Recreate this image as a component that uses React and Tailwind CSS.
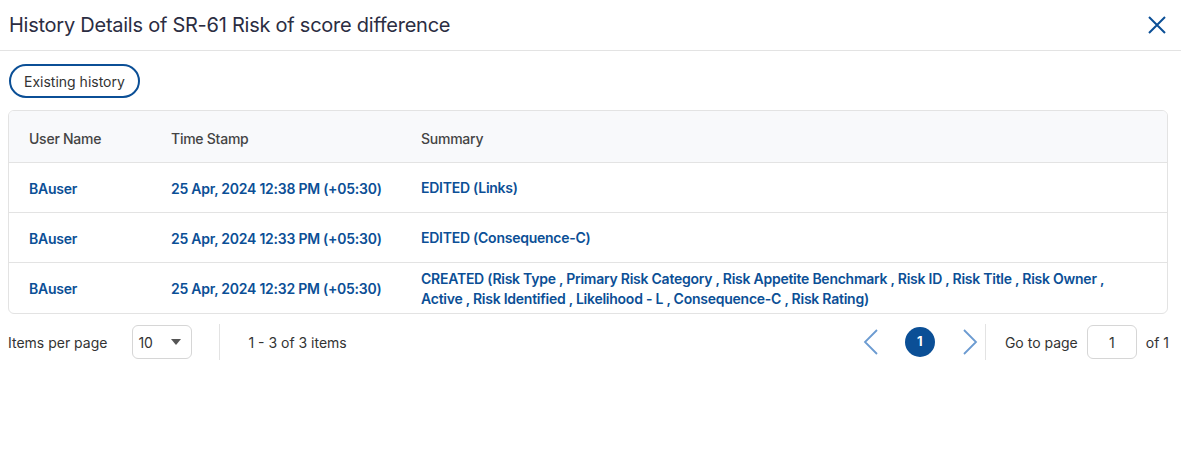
import React from "react";

const rows = [
  { user: "BAuser", time: "25 Apr, 2024 12:38 PM (+05:30)", summary: "EDITED (Links)" },
  { user: "BAuser", time: "25 Apr, 2024 12:33 PM (+05:30)", summary: "EDITED (Consequence-C)" },
  {
    user: "BAuser",
    time: "25 Apr, 2024 12:32 PM (+05:30)",
    summary:
      "CREATED (Risk Type , Primary Risk Category , Risk Appetite Benchmark , Risk ID , Risk Title , Risk Owner , Active , Risk Identified , Likelihood - L , Consequence-C , Risk Rating)",
  },
];

export default function App() {
  return (
    <div className="w-[1181px] h-[461px] bg-white text-[#333] font-['Inter',sans-serif] tracking-[-0.25px]">
      <div className="flex items-center justify-between h-[51px] pl-[9px] pr-[14px] border-b border-[#e3e3e3]">
        <h1 className="text-[20px] text-[#2b2d42]">History Details of SR-61 Risk of score difference</h1>
        <svg width="20" height="20" viewBox="0 0 20 20" className="text-[#0b4f96]">
          <path d="M2 2 L18 18 M18 2 L2 18" stroke="currentColor" strokeWidth="2" />
        </svg>
      </div>
      <div className="px-[8px] pt-[13px]">
        <button className="ml-[1px] h-[34px] px-[13px] rounded-full border-2 border-[#0b4f96] text-[14px] text-[#333] tracking-normal">
          Existing history
        </button>
        <div className="mt-[12px] w-[1160px] border border-[#e3e3e3] rounded-[6px] overflow-hidden">
          <div className="flex items-center h-[52px] pt-[3px] bg-[#f8f9fb] border-b border-[#e3e3e3] text-[14px] text-[#444] font-medium">
            <div className="w-[142px] pl-[20px]">User Name</div>
            <div className="w-[250px] pl-[20px]">Time Stamp</div>
            <div className="flex-1 pl-[20px]">Summary</div>
          </div>
          {rows.map((r, i) => (
            <div
              key={i}
              className={`flex items-center h-[50px] pt-[1px] text-[14px] font-semibold text-[#0b4f96] ${i < rows.length - 1 ? "border-b border-[#e3e3e3]" : ""}`}
            >
              <div className="w-[142px] pl-[20px]">{r.user}</div>
              <div className="w-[250px] pl-[20px]">{r.time}</div>
              <div className="flex-1 pl-[20px] pr-[40px] leading-[20px]">{r.summary}</div>
            </div>
          ))}
        </div>
        <div className="flex items-center h-[56px] text-[14px] text-[#333] tracking-normal">
          <span>Items per page</span>
          <div className="ml-[25px] w-[60px] h-[34px] border border-[#d6d6d6] rounded-[6px] flex items-center justify-between pl-[5px] pr-[10px]">
            <span>10</span>
            <svg width="10" height="6" viewBox="0 0 10 6"><path d="M0 0 L10 0 L5 6 Z" fill="#555" /></svg>
          </div>
          <div className="ml-[27px] w-px h-[36px] bg-[#e3e3e3]" />
          <span className="ml-[28px]">1 - 3 of 3 items</span>
          <div className="flex-1" />
          <svg width="16" height="28" viewBox="0 0 16 28" className="text-[#6b9bd1]">
            <path d="M14 2 L2 14 L14 26" stroke="currentColor" strokeWidth="1.8" fill="none" />
          </svg>
          <div className="ml-[26px] w-[30px] h-[30px] rounded-full bg-[#0b4f96] text-white text-[13px] font-bold flex items-center justify-center">1</div>
          <svg width="16" height="28" viewBox="0 0 16 28" className="ml-[27px] text-[#6b9bd1]">
            <path d="M2 2 L14 14 L2 26" stroke="currentColor" strokeWidth="1.8" fill="none" />
          </svg>
          <div className="ml-[7px] w-px h-[36px] bg-[#e3e3e3]" />
          <span className="ml-[19px]">Go to page</span>
          <div className="ml-[9px] w-[50px] h-[34px] border border-[#d6d6d6] rounded-[6px] flex items-center justify-center">1</div>
          <span className="ml-[9px]">of 1</span>
          <div className="w-[4px]" />
        </div>
      </div>
    </div>
  );
}
